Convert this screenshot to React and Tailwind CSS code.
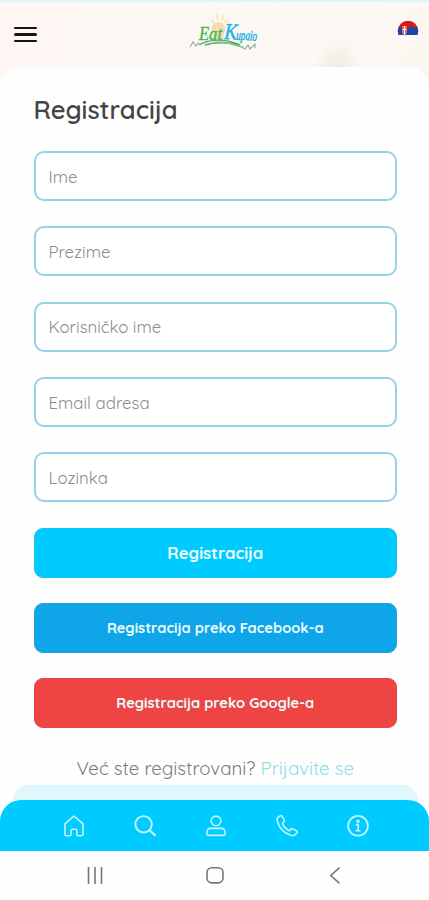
const fields = [
  { name: 'firstName', label: 'Ime' },
  { name: 'lastName', label: 'Prezime' },
  { name: 'username', label: 'Korisničko ime' },
  { name: 'email', label: 'Email adresa' },
  { name: 'password', label: 'Lozinka', type: 'password' },
];

const actions = [
  { label: 'Registracija', className: 'bg-[#00cbfe] text-[16.7px] border-[#14c3f3]' },
  { label: 'Registracija preko Facebook-a', className: 'bg-[#0ea5e9] text-[14.6px] border-[#1fa1dd]' },
  { label: 'Registracija preko Google-a', className: 'bg-[#ef4444] text-[14.6px] border-[#e04648]' },
];

function Logo() {
  return (
    <svg width="70" height="38" viewBox="0 0 70 38" fill="none" overflow="visible">
      <path d="M23 20c-2-6 1-11 6-12 5 0 8 4 7 9l-3 9-7-1z" fill="#f8d3a6" opacity="0.85" />
      <path d="M23 6l2 3M28 1l1 5M34 2l-1 4M38 6l-2 2" stroke="#f9e29a" strokeWidth="1.5" strokeLinecap="round" />
      <path d="M28 12l2 7M32 11l-2 9" stroke="#f3dfba" strokeWidth="1" />
      <text x="10" y="26" fontFamily="Liberation Serif, serif" fontStyle="italic" fontSize="18" fill="#3dbb57" stroke="#3dbb57" strokeWidth="0.4" textLength="23" lengthAdjust="spacingAndGlyphs">Eat</text>
      <text x="35" y="25" transform="rotate(3 35 25)" fontFamily="Liberation Serif, serif" fontStyle="italic" fill="#22b5e2" stroke="#22b5e2" strokeWidth="0.5">
        <tspan fontSize="23" textLength="13" lengthAdjust="spacingAndGlyphs">K</tspan>
        <tspan x="47" fontSize="14" textLength="21" lengthAdjust="spacingAndGlyphs">upaio</tspan>
      </text>
      <path d="M10 31c11-6 26-7 41 0-14-3-26-3-35 0" stroke="#58aa67" strokeWidth="1.4" />
      <path d="M23 29c12-3 20 2 31 4" stroke="#7fc88b" strokeWidth="1.5" />
      <path d="M1 33l3-5 3 4 2-3 3 2M53 33l3 2 3-4 2 4 5-5v4" stroke="#87b59d" strokeWidth="1.1" />
    </svg>
  );
}

function Flag() {
  return (
    <svg width="22" height="22" viewBox="0 0 22 22">
      <defs>
        <clipPath id="flag">
          <circle cx="11" cy="11" r="10.3" />
        </clipPath>
      </defs>
      <g clipPath="url(#flag)">
        <path d="M0 0h22v8H0z" fill="#d71920" />
        <path d="M0 7.5h22V15H0z" fill="#124aa5" />
        <path d="M0 15h22v7H0z" fill="#fffdfb" />
        <path d="M5 6h5v7l-2.5 3L5 13z" fill="#e65c60" />
        <path d="M7.5 6v9M5.5 9.5h4" stroke="#fff" strokeWidth="1.2" />
      </g>
    </svg>
  );
}

function NavIcon({ label, children }) {
  return (
    <button aria-label={label} className="flex w-[71px] justify-center">
      <svg width="24" height="24" viewBox="0 0 24 24" fill="none" stroke="#c4f8ff" strokeWidth="1.6" strokeLinecap="round" strokeLinejoin="round">
        {children}
      </svg>
    </button>
  );
}

function BottomNav() {
  return (
    <nav className="bg-[#fefefe]">
      <div className="mr-[11px] ml-[13px] h-[15px] rounded-t-[20px] bg-[#dff7fd]" />
      <div className="flex h-[51px] items-center justify-center rounded-t-[21px] bg-[#00cbfe] pt-px pl-[2px]">
        <NavIcon label="Početna">
          <path d="M3 9.8L12 2l9 7.8v10.4q0 1.5-1.5 1.5h-3.3q-1.3 0-1.3-1.3v-3.6q0-1.6-1.5-1.6h-2.8q-1.5 0-1.5 1.6v3.6q0 1.3-1.3 1.3H4.5Q3 21.7 3 20.2z" />
        </NavIcon>
        <NavIcon label="Pretraga">
          <circle cx="10.6" cy="10.3" r="8.2" strokeWidth="1.9" />
          <path d="M16.5 16.2l5.5 4.9" strokeWidth="2.2" />
        </NavIcon>
        <NavIcon label="Profil">
          <circle cx="12" cy="6.9" r="4.8" />
          <path d="M6.5 14.4h11a3.5 3.5 0 0 1 3.5 3.5v1.6a1.9 1.9 0 0 1-1.9 1.9H4.9A1.9 1.9 0 0 1 3 19.5v-1.6a3.5 3.5 0 0 1 3.5-3.5z" />
        </NavIcon>
        <NavIcon label="Telefon">
          <path d="M5.1 1.9L3.2 3.1c-1.5 1.1-1.2 3.2-.7 4.8 2.1 6.4 7 11.1 13.2 13.4 1.7.6 3.5.6 4.6-.7l1.6-1.9c.6-.8.2-1.4-.6-1.9l-3.6-1.9c-.7-.4-1.3-.3-1.8.3l-.8 1c-.6.6-1.1.5-1.7.1-2.5-1.5-4.4-3.5-5.7-6-.3-.6-.3-1 .2-1.5l1-.9c.5-.5.6-1.1.3-1.7L7.1 2.4c-.5-.9-1.2-1-2-.5z" />
        </NavIcon>
        <NavIcon label="Informacije">
          <circle cx="12" cy="11.8" r="9.9" strokeWidth="1.8" />
          <circle cx="12" cy="7.2" r="1" />
          <path d="M10.4 10.6h1.8v6m-2 .2h3.8" strokeWidth="1.6" />
        </NavIcon>
      </div>
    </nav>
  );
}

function SystemBar() {
  return (
    <div className="flex h-[49px] items-center justify-center bg-[#fefefe]">
      <svg width="258" height="22" viewBox="0 0 258 22" fill="none" stroke="#777" strokeWidth="1.6">
        <path d="M2.5 2v17M9 2v17M15.5 2v17" />
        <rect x="121" y="2.7" width="16" height="15.2" rx="4.8" />
        <path d="M253.5 2.7l-8.7 7.8 8.7 7.8" />
      </svg>
    </div>
  );
}

export default function App() {
  return (
    <div className="flex h-[900px] w-[429px] flex-col overflow-hidden bg-[linear-gradient(100deg,#fdf6f3,#fdf8f4_60%,#f7f3e9)] font-['Quicksand','Lato',sans-serif]">
      <div className="h-[2px] shrink-0 bg-[#d9f8f7]" />
      <header className="flex h-[65px] shrink-0 items-center justify-between bg-[radial-gradient(ellipse_24px_38px_at_337px_72px,#ece9df,transparent)] pr-[10.5px] pl-[14px]">
        <button aria-label="Meni" className="flex w-[23px] flex-col gap-[4px]">
          <span className="h-[2.5px] rounded bg-[#161515]" />
          <span className="h-[2.5px] rounded bg-[#161515]" />
          <span className="h-[2.5px] rounded bg-[#161515]" />
        </button>
        <div className="-mt-[3px] ml-[14px]">
          <Logo />
        </div>
        <div className="-mt-2">
          <Flag />
        </div>
      </header>

      <main className="flex-1 rounded-t-[20px] bg-[#fefefe] pt-[25px] pr-[32px] pl-[33.5px]">
        <h1 className="h-[59.2px] text-[25.5px] leading-[34px] font-semibold text-[#454545]">Registracija</h1>
        <form className="flex flex-col gap-[25.3px]">
          {fields.map((field) => (
            <input
              key={field.name}
              type={field.type || 'text'}
              placeholder={field.label}
              className="h-[50px] w-full rounded-[10px] border-2 border-[#97d1e8] bg-white px-[13px] text-[16.8px] placeholder:text-[#8c8c8c]"
            />
          ))}
          {actions.map((action) => (
            <button key={action.label} type="button" className={`h-[50px] rounded-[9px] border font-bold text-[#eafcff] ${action.className}`}>
              {action.label}
            </button>
          ))}
        </form>
        <p className="mt-[25.5px] text-center text-[18.7px] leading-[28px] whitespace-nowrap text-[#7b7b7b]">
          Već ste registrovani? <a className="text-[#8cdfe2]">Prijavite se</a>
        </p>
      </main>

      <BottomNav />
      <SystemBar />
    </div>
  );
}
